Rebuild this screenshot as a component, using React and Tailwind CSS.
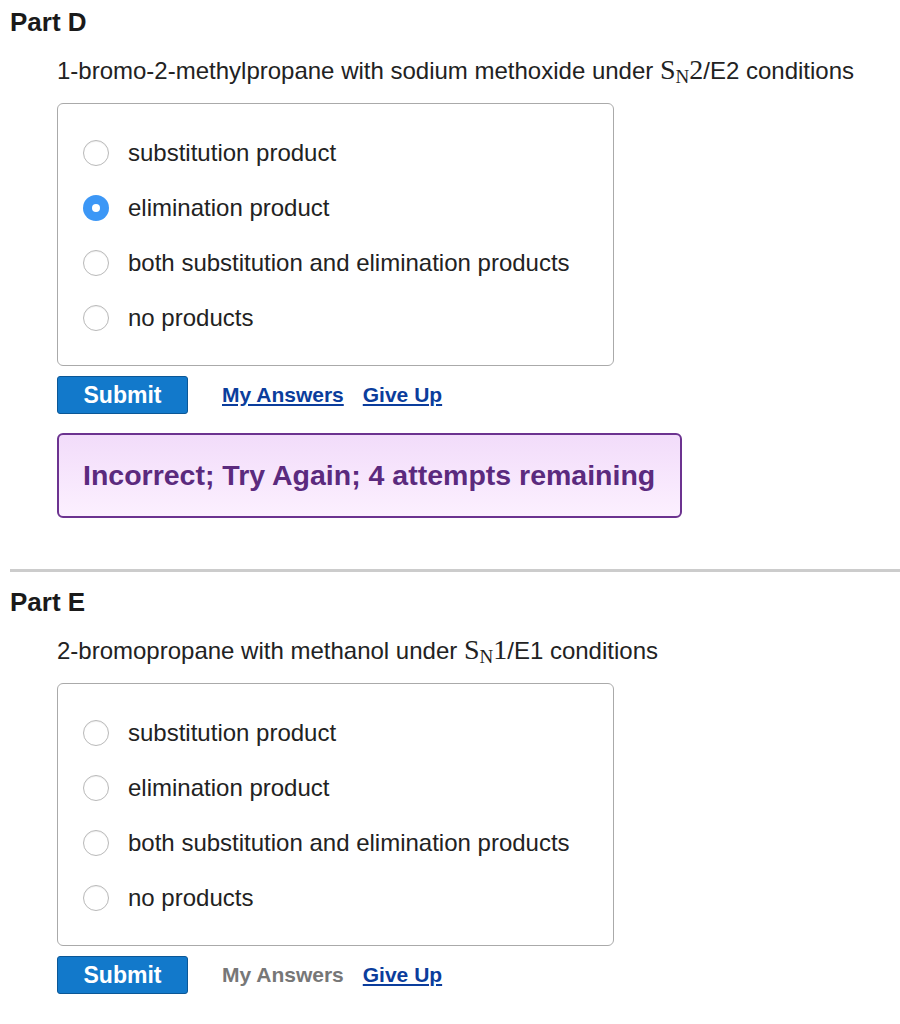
const OPTIONS = [
  "substitution product",
  "elimination product",
  "both substitution and elimination products",
  "no products",
];

function Radio({ checked }) {
  if (checked) {
    return (
      <span className="w-[26px] h-[26px] rounded-full bg-[#3c97f6] flex items-center justify-center shrink-0">
        <span className="w-[8px] h-[8px] rounded-full bg-white" />
      </span>
    );
  }
  return (
    <span className="w-[26px] h-[26px] rounded-full border border-[#b9b9b9] bg-white shadow-[inset_0_1px_1px_rgba(0,0,0,0.06)] shrink-0" />
  );
}

function Part({ title, question, selected, myAnswersActive, feedback, top }) {
  return (
    <section className={top}>
      <h2 className="pl-[10px] text-[26px] font-bold text-[#1a1a1a] leading-none">{title}</h2>
      <div className="pl-[57px]">
        <p className="mt-[21px] h-[24px] text-[24px] text-[#222] leading-none whitespace-nowrap">{question}</p>
        <div className="mt-[23px] w-[557px] h-[263px] border border-[#aaa] rounded-[6px] pl-[25px] pt-[36px] flex flex-col gap-[29px]">
          {OPTIONS.map((o, i) => (
            <label key={o} className="flex items-center gap-[19px] h-[26px] text-[24px] text-[#222]">
              <Radio checked={selected === i} />
              <span>{o}</span>
            </label>
          ))}
        </div>
        <div className="mt-[10px] flex items-center">
          <button className="w-[131px] h-[38px] bg-[#1279cb] border border-[#0b5796] rounded-[3px] text-white font-bold text-[23px] leading-none">
            Submit
          </button>
          <a className={"ml-[34px] text-[21px] font-bold " + (myAnswersActive ? "text-[#0b3d9c] underline" : "text-[#777]")}>
            My Answers
          </a>
          <a className="ml-[19px] text-[21px] font-bold text-[#0b3d9c] underline">Give Up</a>
        </div>
        {feedback && (
          <div className="mt-[19px] w-[625px] h-[85px] border-2 border-[#6c3390] rounded-[6px] bg-gradient-to-b from-[#f2dcfa] to-[#fcf0ff] flex items-center pl-[24px]">
            <span className="text-[28.5px] font-bold text-[#5b2a7e] leading-none">{feedback}</span>
          </div>
        )}
      </div>
    </section>
  );
}

function SN({ n, rest }) {
  return (
    <>
      <span className="font-['Liberation_Serif',serif] text-[28px] leading-none">
        S<span className="relative top-[4px] text-[19px] leading-none">N</span>{n}
      </span>
      {rest}
    </>
  );
}

export default function App() {
  return (
    <div className="w-[900px] h-[1024px] bg-white font-['Liberation_Sans',Arial,sans-serif] overflow-hidden">
      <Part
        top="pt-[9px]"
        title="Part D"
        question={<>1-bromo-2-methylpropane with sodium methoxide under <SN n="2" rest="/E2 conditions" /></>}
        selected={1}
        myAnswersActive
        feedback="Incorrect; Try Again; 4 attempts remaining"
      />
      <div className="mt-[51px] ml-[10px] h-[3px] bg-[#cccccc]" />
      <Part
        top="pt-[17px]"
        title="Part E"
        question={<>2-bromopropane with methanol under <SN n="1" rest="/E1 conditions" /></>}
        selected={-1}
        myAnswersActive={false}
      />
    </div>
  );
}
